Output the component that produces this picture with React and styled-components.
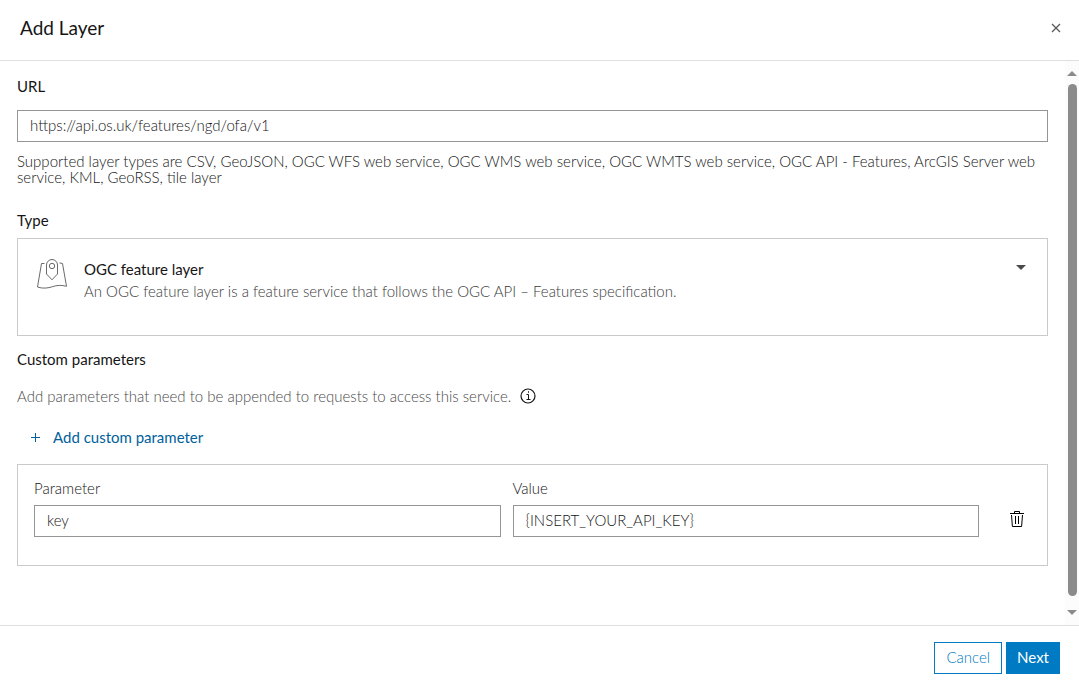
import React, { useState } from "react";
import styled, { createGlobalStyle } from "styled-components";

const initialParams = [{ id: 1, name: "key", value: "{INSERT_YOUR_API_KEY}" }];

const MapPinIcon = () => (
  <svg width="32" height="32" viewBox="0 0 32 32" fill="none" stroke="#6a6a6a">
    <path d="M8.5 4.5h-3L1.500 28c5 1.800 10.500 1.200 15-.3 4.500-1.600 9-1.700 14-.4L26.500 4.500l-3-.6" />
    <path d="M16 20.800L10.500 15V6a5.500 5.500 0 0 1 11 0v9z" />
    <circle cx="16" cy="7" r="2.700" />
  </svg>
);

const InfoIcon = () => (
  <svg width="16" height="16" viewBox="0 0 16 16" fill="none" stroke="#151515">
    <circle cx="8" cy="8" r="7" strokeWidth="1.200" />
    <path d="M6.500 6.500h2v5M6.500 11.500h4" />
    <path d="M8 4h1" strokeWidth="1.500" />
  </svg>
);

const TrashIcon = () => (
  <svg width="16" height="18" viewBox="0 0 16 18" fill="none" stroke="#000">
    <path d="M1 3.500h14M5.500 3.500v-2h5v2M2.500 5l.9 11.500h9.200L13.500 5M6.500 6v8M9.500 6v8" />
  </svg>
);

const PlusIcon = () => (
  <svg width="10" height="10" viewBox="0 0 10 10" stroke="#00619b">
    <path d="M0 5.500h9M4.500 1v9" />
  </svg>
);

const CloseIcon = () => (
  <svg
    width="10"
    height="10"
    viewBox="0 0 10 10"
    stroke="#5a5a5a"
    strokeWidth="1.300"
  >
    <path d="M1 1l8 8M9 1L1 9" />
  </svg>
);

const App = () => {
  const [url, setUrl] = useState("https://api.os.uk/features/ngd/ofa/v1");
  const [params, setParams] = useState(initialParams);

  const addParam = () => {
    setParams([...params, { id: Date.now(), name: "", value: "" }]);
  };

  const removeParam = (id) => {
    setParams(params.filter((param) => param.id !== id));
  };

  const updateParam = (id, field, text) => {
    setParams(
      params.map((param) =>
        param.id === id ? { ...param, [field]: text } : param
      )
    );
  };

  return (
    <Dialog role="dialog" aria-labelledby="dialog-title">
      <GlobalStyle />
      <Header>
        <Title id="dialog-title">Add Layer</Title>
        <IconButton aria-label="Close">
          <CloseIcon />
        </IconButton>
      </Header>

      <Body>
        <Content>
          <Label htmlFor="url">URL</Label>
          <UrlInput
            id="url"
            value={url}
            onChange={(ev) => setUrl(ev.target.value)}
          />
          <Help>
            Supported layer types are CSV, GeoJSON, OGC WFS web service, OGC WMS
            web service, OGC WMTS web service, OGC API - Features, ArcGIS Server
            web service, KML, GeoRSS, tile layer
          </Help>

          <TypeLabel id="type-label">Type</TypeLabel>
          <TypeButton aria-labelledby="type-label type-name">
            <MapPinIcon />
            <TypeText>
              <TypeName id="type-name">OGC feature layer</TypeName>
              <TypeInfo>
                An OGC feature layer is a feature service that follows the OGC
                API – Features specification.
              </TypeInfo>
            </TypeText>
            <Caret />
          </TypeButton>

          <SectionTitle>Custom parameters</SectionTitle>
          <Description>
            Add parameters that need to be appended to requests to access this
            service.
            <InfoIcon />
          </Description>
          <AddButton onClick={addParam}>
            <PlusIcon />
            Add custom parameter
          </AddButton>

          <ParamBox>
            {params.map((param) => (
              <ParamRow key={param.id}>
                <Field>
                  Parameter
                  <TextInput
                    value={param.name}
                    onChange={(ev) =>
                      updateParam(param.id, "name", ev.target.value)
                    }
                  />
                </Field>
                <Field>
                  Value
                  <TextInput
                    value={param.value}
                    onChange={(ev) =>
                      updateParam(param.id, "value", ev.target.value)
                    }
                  />
                </Field>
                <DeleteButton
                  aria-label="Delete parameter"
                  onClick={() => removeParam(param.id)}
                >
                  <TrashIcon />
                </DeleteButton>
              </ParamRow>
            ))}
          </ParamBox>
        </Content>

        <ScrollTrack aria-hidden="true">
          <ScrollArrow $up />
          <ScrollThumb />
          <ScrollArrow />
        </ScrollTrack>
      </Body>

      <Footer>
        <Button>Cancel</Button>
        <Button $primary>Next</Button>
      </Footer>
    </Dialog>
  );
};

const GlobalStyle = createGlobalStyle`
  * {
    box-sizing: border-box;
  }
  body {
    margin: 0;
    background: #fff;
  }
  body, button, input {
    font-family: Lato, "Liberation Sans", sans-serif;
    font-size: 15px;
    font-weight: 300;
    line-height: 20px;
    color: #151515;
  }
`;

const Dialog = styled.div`
  min-height: 100vh;
  display: flex;
  flex-direction: column;
`;

const Header = styled.header`
  display: flex;
  align-items: center;
  justify-content: space-between;
  padding: 16px 18px 20px 20px;
  border-bottom: 1px solid #dfdfdf;
`;

const Title = styled.h1`
  margin: 0;
  font-size: 19px;
  font-weight: 400;
  line-height: 24px;
  color: #151515;
`;

const IconButton = styled.button`
  display: flex;
  padding: 0;
  border: none;
  background: transparent;
  cursor: pointer;
`;

const Body = styled.main`
  flex: 1;
  display: flex;
`;

const Content = styled.div`
  flex: 1;
  display: flex;
  flex-direction: column;
  align-items: stretch;
  padding: 15px 17px;
`;

const Label = styled.label`
  font-weight: 400;
  color: #151515;
`;

const TextInput = styled.input`
  width: 100%;
  height: 32px;
  padding: 0 12px 2px;
  border: 1px solid #959595;
  border-radius: 0;
  background: #fff;
`;

const UrlInput = styled(TextInput)`
  margin-top: 14px;
`;

const Help = styled.p`
  margin: 11px 0 0;
  line-height: 16px;
`;

const TypeLabel = styled.div`
  margin-top: 25px;
  font-weight: 400;
  color: #151515;
`;

const TypeButton = styled.button`
  display: flex;
  align-items: flex-start;
  min-height: 98px;
  margin-top: 8px;
  padding: 20px 21px 20px 18px;
  border: 1px solid #cacaca;
  background: #fff;
  text-align: left;
  cursor: pointer;
`;

const TypeText = styled.span`
  flex: 1;
  display: flex;
  flex-direction: column;
  gap: 2px;
  margin-left: 16px;
`;

const TypeName = styled.span`
  font-weight: 400;
  color: #151515;
`;

const TypeInfo = styled.span`
  color: #3a3a3a;
`;

const Caret = styled.span`
  margin-top: 6px;
  border: 5px solid transparent;
  border-top-color: #4a4a4a;
  border-bottom: none;
`;

const SectionTitle = styled.h2`
  margin: 13px 0 0;
  font-size: 15px;
  font-weight: 400;
  color: #151515;
`;

const Description = styled.p`
  display: flex;
  align-items: center;
  gap: 9px;
  margin: 17px 0 0;
  color: #4a4a4a;
`;

const AddButton = styled.button`
  display: flex;
  align-items: center;
  align-self: flex-start;
  gap: 12px;
  margin-top: 21px;
  padding: 0 14px;
  border: none;
  background: transparent;
  font-weight: 400;
  color: #00619b;
  cursor: pointer;
`;

const ParamBox = styled.section`
  display: flex;
  flex-direction: column;
  gap: 12px;
  margin-top: 17px;
  padding: 13px 16px 28px;
  border: 1px solid #cacaca;
`;

const ParamRow = styled.div`
  display: flex;
  align-items: flex-end;
  gap: 12px;
`;

const Field = styled.label`
  flex: 1;
  display: flex;
  flex-direction: column;
  gap: 7px;
`;

const DeleteButton = styled(IconButton)`
  align-items: center;
  justify-content: flex-end;
  width: 40px;
  height: 36px;
  padding-right: 6px;
`;

const ScrollTrack = styled.div`
  width: 14px;
  display: flex;
  flex-direction: column;
  align-items: center;
  padding: 10px 0;
  background: #fcfcfc;
`;

const ScrollArrow = styled.div`
  border: 5px solid transparent;
  border-top: ${(p) => (p.$up ? "none" : "5px solid #8b8b8b")};
  border-bottom: ${(p) => (p.$up ? "5px solid #8b8b8b" : "none")};
`;

const ScrollThumb = styled.div`
  flex: 1;
  width: 9px;
  margin: 8px 0 14px;
  border-radius: 5px;
  background: #8b8b8b;
`;

const Footer = styled.footer`
  display: flex;
  justify-content: flex-end;
  gap: 4px;
  padding: 16px 19px 11px;
  border-top: 1px solid #dfdfdf;
`;

const Button = styled.button`
  height: 32px;
  padding: ${(p) => (p.$primary ? "0 10px 2px" : "0 11px 2px")};
  border: 1px solid #007ac2;
  background: ${(p) => (p.$primary ? "#007ac2" : "#fff")};
  font-weight: ${(p) => (p.$primary ? 400 : 300)};
  color: ${(p) => (p.$primary ? "#fff" : "#007ac2")};
  cursor: pointer;
`;

export default App;
